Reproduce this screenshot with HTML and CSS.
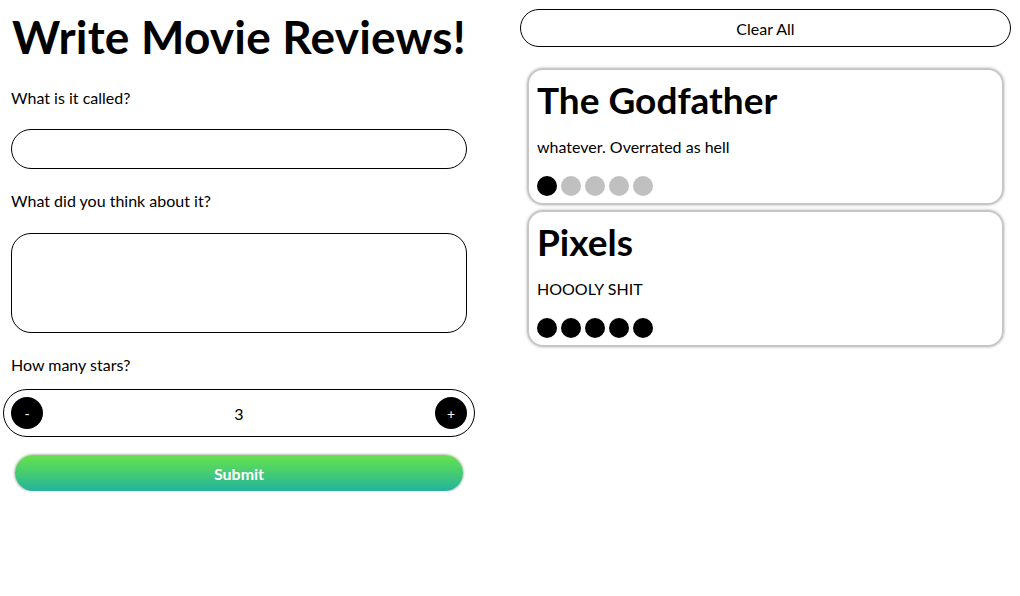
FILE: index.html
```html
<!DOCTYPE html>
<html lang="en">
<head>
<meta charset="utf-8">
<title>Write Movie Reviews!</title>
<link rel="stylesheet" href="styles.css">
</head>
<body>
<div class="app">
  <section class="editor">
    <h1 class="page-title">Write Movie Reviews!</h1>
    <label class="field-label" for="title">What is it called?</label>
    <input class="text-input" id="title" type="text">
    <label class="field-label" for="review">What did you think about it?</label>
    <textarea class="text-area" id="review"></textarea>
    <label class="field-label">How many stars?</label>
    <div class="stepper">
      <button class="step-btn" type="button">-</button>
      <span class="step-value">3</span>
      <button class="step-btn" type="button">+</button>
    </div>
    <button class="submit-btn" type="button">Submit</button>
  </section>
  <section class="reviews">
    <button class="clear-btn" type="button">Clear All</button>
    <div class="review-list">
      <article class="card">
        <h2 class="card-title">The Godfather</h2>
        <p class="card-text">whatever. Overrated as hell</p>
        <div class="dots">
          <span class="dot on"></span><span class="dot"></span><span class="dot"></span><span class="dot"></span><span class="dot"></span>
        </div>
      </article>
      <article class="card">
        <h2 class="card-title">Pixels</h2>
        <p class="card-text">HOOOLY SHIT</p>
        <div class="dots">
          <span class="dot on"></span><span class="dot on"></span><span class="dot on"></span><span class="dot on"></span><span class="dot on"></span>
        </div>
      </article>
    </div>
  </section>
</div>
</body>
</html>
```

FILE: styles.css
```css
* { box-sizing: border-box; }
html, body { margin: 0; padding: 0; background: #fff; }
body {
  font-family: "Lato", "Noto Sans", sans-serif;
  color: #000;
}
.app {
  display: flex;
  align-items: flex-start;
}
.editor {
  width: 510px;
  display: flex;
  flex-direction: column;
  align-items: flex-start;
  padding: 0 0 0 3px;
}
.page-title {
  margin: 9px 0 0 9px;
  font-size: 46px;
  line-height: 56px;
  letter-spacing: 0.2px;
  font-weight: 700;
}
.field-label {
  display: block;
  margin: 23px 0 0 8px;
  font-size: 16px;
  line-height: 20px;
}
.text-input {
  margin: 21px 0 0 8px;
  width: 456px;
  height: 40px;
  border: 1px solid #000;
  border-radius: 20px;
  padding: 0 14px;
  font: inherit;
  outline: none;
}
.text-area {
  display: block;
  margin: 22px 0 0 8px;
  width: 456px;
  height: 100px;
  border: 1px solid #000;
  border-radius: 20px;
  padding: 10px 14px;
  font: inherit;
  resize: none;
  outline: none;
}
.text-input + .field-label,
.text-area + .field-label { margin-top: 22px; }
.stepper {
  margin-top: 14px;
  width: 472px;
  height: 48px;
  border: 1px solid #000;
  border-radius: 24px;
  display: flex;
  align-items: center;
  justify-content: space-between;
  padding: 0 7px;
}
.step-btn {
  width: 32px;
  height: 32px;
  border-radius: 50%;
  border: none;
  background: #000;
  color: #fff;
  font-family: inherit;
  font-size: 14px;
  padding: 0;
  display: flex;
  align-items: center;
  justify-content: center;
}
.step-value { font-size: 16px; }
.submit-btn {
  margin: 18px 0 0 12px;
  width: 448px;
  height: 36px;
  border: none;
  border-radius: 18px;
  background: linear-gradient(to bottom, #68e34a, #22b39c);
  box-shadow: 0 0 2px 1px rgba(0,0,0,0.25);
  color: #fff;
  font-family: inherit;
  font-size: 16px;
  font-weight: 700;
}
.reviews {
  flex: 1;
  padding: 9px 9px 0 10px;
  display: flex;
  flex-direction: column;
}
.clear-btn {
  height: 38px;
  width: 100%;
  border: 1px solid #000;
  border-radius: 19px;
  background: #fff;
  font-family: inherit;
  font-size: 16px;
  color: #000;
}
.review-list {
  margin-top: 21px;
  padding: 0 7px;
  display: flex;
  flex-direction: column;
  gap: 5px;
}
.card {
  border: 2px solid #c6c6c6;
  border-radius: 16px;
  box-shadow: 0 0 3px rgba(0,0,0,0.3);
  padding: 8px 8px 7px;
}
.card-title {
  margin: 0;
  font-size: 37px;
  line-height: 43px;
  font-weight: 700;
}
.card-text {
  margin: 16px 0 0;
  font-size: 16px;
  line-height: 20px;
}
.dots {
  margin-top: 19px;
  display: flex;
  gap: 4px;
}
.dot {
  width: 20px;
  height: 20px;
  border-radius: 50%;
  background: #c0c0c0;
}
.dot.on { background: #000; }
```
